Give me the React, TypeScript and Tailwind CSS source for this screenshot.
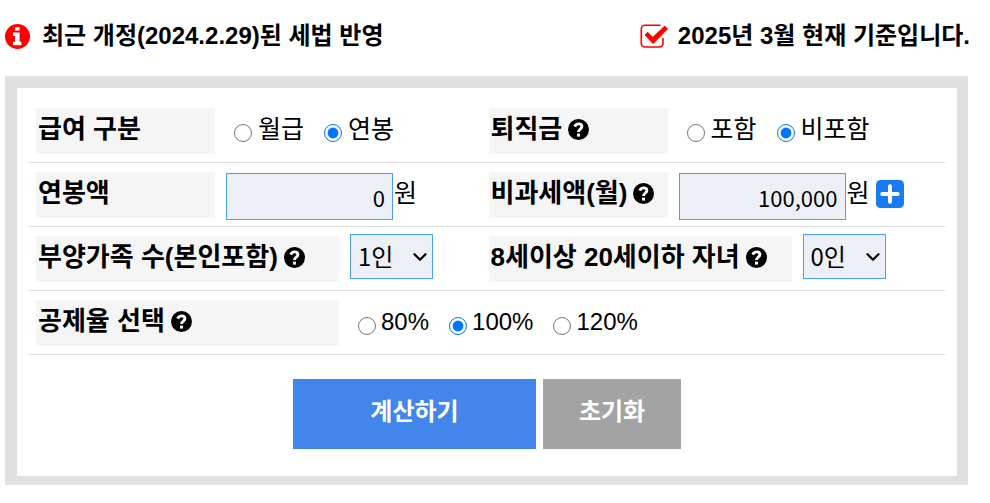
import type { ReactNode } from "react";
import { ChevronDown } from "lucide-react";

const CONTROL = "border border-[#4a9ff5] bg-[#ecf0f6] text-black rounded-none";

function InfoIcon() {
  return (
    <svg viewBox="0 0 25 25" className="size-[25px]" aria-hidden="true">
      <circle cx="12.5" cy="12.5" r="12.5" fill="#f00" />
      <path d="M10 3.200h4.600v3.400H10zM8 8.600h6.600v9.200h1.800v3.400H8v-3.400h2V12H8z" fill="#fff" />
    </svg>
  );
}

function CheckIcon() {
  return (
    <svg viewBox="0 0 28 24" className="h-6 w-7" fill="none" aria-hidden="true">
      <path d="M20.500 1.200H4.800A3.500 3.500 0 0 0 1.300 4.700V19.500A3.500 3.500 0 0 0 4.800 23H19.500A3.500 3.500 0 0 0 23 19.500V14" stroke="#f00" strokeWidth="1.600" />
      <path d="M5 11L7.700 8.300L12.800 13.200L24.800 2L27.600 4.900L13.100 19.700Z" fill="#f00" stroke="#f00" strokeWidth=".8" strokeLinejoin="round" />
    </svg>
  );
}

function QuestionIcon() {
  return (
    <svg viewBox="0 0 21 21" className="size-[21px]" aria-hidden="true">
      <circle cx="10.500" cy="10.500" r="10.500" fill="#000" />
      <path d="M6.700 7.600C7.500 5.700 8.900 4.900 10.500 4.900C12.600 4.900 13.900 6.100 13.900 7.600C13.900 10.200 10.500 10 10.500 13" fill="none" stroke="#fff" strokeWidth="2.900" />
      <rect x="9" y="14.600" width="3" height="3" fill="#fff" />
    </svg>
  );
}

function PlusIcon() {
  return (
    <svg viewBox="0 0 28 28" className="size-7" aria-hidden="true">
      <rect width="28" height="28" rx="4.500" fill="#1a7af0" />
      <path d="M14 6.300V21.700M6.300 14H21.700" stroke="#fff" strokeWidth="4" strokeLinecap="round" />
    </svg>
  );
}

function Caption({ text, htmlFor, wide, help }: { text: string; htmlFor?: string; wide?: boolean; help?: boolean }) {
  return (
    <div
      className={`${wide ? "w-[303px]" : "w-[179px]"} flex h-[46px] shrink-0 items-center gap-1.5 whitespace-nowrap bg-[#f5f5f5] pb-1 pl-0.5 text-[26px] font-bold leading-8`}
    >
      {htmlFor ? <label htmlFor={htmlFor}>{text}</label> : <span>{text}</span>}
      {help && (
        <button type="button" aria-label={`${text} 도움말`} className="shrink-0">
          <QuestionIcon />
        </button>
      )}
    </div>
  );
}

function Row({ children }: { children: ReactNode }) {
  return <div className="grid h-16 grid-cols-2 border-b border-[#dcdcdc] pl-[7px] pr-1 pt-[9px]">{children}</div>;
}

function Cell({ children }: { children: ReactNode }) {
  return <div className="flex items-start gap-[11px] whitespace-nowrap">{children}</div>;
}

function Radios({ name, legend, options, selected, latin }: { name: string; legend: string; options: string[]; selected: string; latin?: boolean }) {
  return (
    <div
      role="radiogroup"
      aria-label={legend}
      className={`${latin ? "h-11 text-2xl" : "h-[42px] text-[25px]"} flex items-center gap-5 pl-2 leading-8`}
    >
      {options.map((option) => (
        <label key={option} className={`${latin ? "gap-[5px]" : "gap-1.5"} flex items-center`}>
          <input
            type="radio"
            name={name}
            defaultChecked={option === selected}
            className="mt-2 size-[18px]"
          />
          {option}
        </label>
      ))}
    </div>
  );
}

function Amount({ id, value, children }: { id: string; value: string; children?: ReactNode }) {
  return (
    <div className="flex items-start">
      <input
        id={id}
        type="text"
        inputMode="numeric"
        defaultValue={value}
        className={`${CONTROL} mt-px h-[47px] w-[167px] pr-[7px] text-right font-['Noto_Sans_CJK_KR',sans-serif] text-[22px]`}
      />
      <span className="flex h-[42px] items-center pl-px text-[25px] leading-8">원</span>
      {children}
    </div>
  );
}

function People({ id, value }: { id: string; value: string }) {
  return (
    <div className="relative -mt-0.5">
      <select
        id={id}
        defaultValue={value}
        className={`${CONTROL} h-[45px] w-[83px] appearance-none pb-0.5 pl-[7px] font-['Noto_Sans_CJK_KR',sans-serif] text-2xl`}
      >
        {["0인", "1인", "2인", "3인", "4인", "5인"].map((n) => (
          <option key={n}>{n}</option>
        ))}
      </select>
      <ChevronDown className="pointer-events-none absolute right-0.5 top-3 size-[22px]" strokeWidth={2.4} aria-hidden="true" />
    </div>
  );
}

export default function App() {
  return (
    <main className="bg-white font-['Liberation_Sans','Noto_Sans_CJK_KR',sans-serif] text-black">
      <header className="flex items-center justify-between pb-6 pl-[5px] pr-5 pt-5 text-2xl font-bold leading-8">
        <p className="flex items-center gap-3">
          <InfoIcon />
          최근 개정(2024.2.29)된 세법 반영
        </p>
        <p className="flex items-center gap-2.5">
          <CheckIcon />
          2025년 3월 현재 기준입니다.
        </p>
      </header>

      <form
        onSubmit={(e) => e.preventDefault()}
        className="ml-[5px] mr-[22px] border-[12px] border-b-[9px] border-r-[11px] border-[#e0e0e0] px-3 pb-[27px] pt-[11px]"
      >
        <Row>
          <Cell>
            <Caption text="급여 구분" />
            <Radios name="payType" legend="급여 구분" options={["월급", "연봉"]} selected="연봉" />
          </Cell>
          <Cell>
            <Caption text="퇴직금" help />
            <Radios name="severance" legend="퇴직금" options={["포함", "비포함"]} selected="비포함" />
          </Cell>
        </Row>
        <Row>
          <Cell>
            <Caption text="연봉액" htmlFor="salary" />
            <Amount id="salary" value="0" />
          </Cell>
          <Cell>
            <Caption text="비과세액(월)" htmlFor="taxFree" help />
            <Amount id="taxFree" value="100,000">
              <button type="button" aria-label="비과세액 추가" className="ml-1.5 mt-2">
                <PlusIcon />
              </button>
            </Amount>
          </Cell>
        </Row>
        <Row>
          <Cell>
            <Caption text="부양가족 수(본인포함)" htmlFor="family" wide help />
            <People id="family" value="1인" />
          </Cell>
          <Cell>
            <Caption text="8세이상 20세이하 자녀" htmlFor="children" wide help />
            <People id="children" value="0인" />
          </Cell>
        </Row>
        <Row>
          <Cell>
            <Caption text="공제율 선택" wide help />
            <Radios name="rate" legend="공제율 선택" options={["80%", "100%", "120%"]} selected="100%" latin />
          </Cell>
        </Row>

        <div className="mt-6 flex justify-center gap-[7px] text-2xl font-bold text-white">
          <button type="submit" className="h-[70px] w-[243px] bg-[#4285eb] pb-1">
            계산하기
          </button>
          <button type="reset" className="h-[70px] w-[138px] bg-[#a3a3a3] pb-1">
            초기화
          </button>
        </div>
      </form>
    </main>
  );
}
